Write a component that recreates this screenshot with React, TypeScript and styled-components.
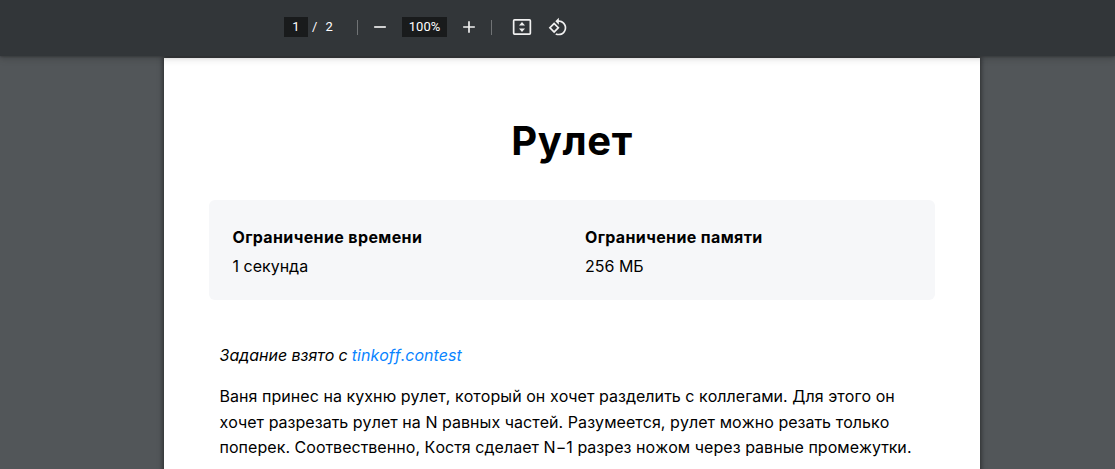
import React from 'react';
import styled, { createGlobalStyle } from 'styled-components';

const GlobalStyle = createGlobalStyle`
  * { box-sizing: border-box; }
  body { margin: 0; background: #525659; overflow: hidden; }
`;

const Viewer = styled.div`
  height: 469px;
  overflow: hidden;
  background: #525659;
  display: flex;
  flex-direction: column;
  font-family: Inter, sans-serif;
  font-kerning: none;
  color: #000;
`;

const Toolbar = styled.header`
  position: relative;
  z-index: 1;
  flex: none;
  height: 56px;
  padding: 0 0 2px 284px;
  display: flex;
  align-items: center;
  background: #323639;
  color: #fff;
  font: 13px/20px Roboto, sans-serif;
  box-shadow: 0 -2px 8px rgba(0, 0, 0, 0.09), 0 4px 8px rgba(0, 0, 0, 0.06),
    0 1px 2px rgba(0, 0, 0, 0.2), 0 2px 6px rgba(0, 0, 0, 0.1);
`;

const Field = styled.span<{ $width: number; $left?: number }>`
  width: ${(p) => p.$width}px;
  height: 20px;
  margin-left: ${(p) => p.$left ?? 0}px;
  text-align: center;
  background: #191b1c;
`;

const Total = styled.span`
  margin-left: 4px;
  width: 45px;
  word-spacing: 5px;
`;

const Divider = styled.i<{ $left?: number }>`
  width: 1px;
  height: 15px;
  margin-left: ${(p) => p.$left ?? 0}px;
  background: #707375;
`;

const Icon = styled.svg<{ $left: number }>`
  width: 20px;
  height: 20px;
  margin-left: ${(p) => p.$left}px;
  fill: #f1f1f1;
`;

const Page = styled.main`
  flex: none;
  width: 816px;
  height: 500px;
  margin: 2px 0 0 164px;
  padding: 58px 45px 0;
  background: #fff;
  box-shadow: 0 0 5px 1px rgba(0, 0, 0, 0.5);
`;

const Title = styled.h1`
  margin: 0;
  font-size: 40px;
  line-height: 49px;
  font-weight: 700;
  letter-spacing: 0.6px;
  text-align: center;
`;

const Limits = styled.section`
  margin-top: 35px;
  height: 100px;
  padding: 23px 23.5px;
  display: grid;
  grid-template-columns: 352.5px 1fr;
  border-radius: 6px;
  background: #f6f7f9;
`;

const Limit = styled.div`
  font-size: 16px;
  line-height: 29px;
`;

const Label = styled.div`
  font-weight: 700;
  letter-spacing: 0.38px;
`;

const Source = styled.p`
  margin: 42px 0 0 10.5px;
  font-size: 16px;
  line-height: 26px;
  font-style: italic;
  word-spacing: -0.3px;
`;

const Link = styled.a`
  color: #0a84ff;
`;

const Statement = styled.p`
  margin: 16px 0 0 10.5px;
  font-size: 16px;
  line-height: 25.6px;
  letter-spacing: 0.05px;
`;

const Line = styled.span`
  display: block;
  white-space: nowrap;
`;

export default function App() {
  return (
    <Viewer>
      <GlobalStyle />
      <Toolbar>
        <Field $width={24}>1</Field>
        <Total>/ 2</Total>
        <Divider />
        <Icon $left={12} viewBox="0 0 24 24"><path d="M19 13H5v-2h14v2z" /></Icon>
        <Field $width={45} $left={12}>100%</Field>
        <Icon $left={12} viewBox="0 0 24 24"><path d="M19 13h-6v6h-2v-6H5v-2h6V5h2v6h6v2z" /></Icon>
        <Divider $left={12} />
        <Icon $left={20} viewBox="0 0 20 20">
          <path fillRule="evenodd" d="M2.5 2h15A1.7 1.7 0 0 1 19.2 3.7v12.600A1.7 1.7 0 0 1 17.500 18H2.500A1.7 1.7 0 0 1 .8 16.300V3.700A1.7 1.7 0 0 1 2.500 2zM2.500 3.700v12.600h15V3.700zM10 4.900l3 3.500H7zM7 11.600h6L10 15.100z" />
        </Icon>
        <Icon $left={16} viewBox="0 0 24 24">
          <path d="M7.34 6.41L.86 12.9l6.49 6.48 6.49-6.48-6.5-6.49zM3.69 12.9l3.66-3.66L11 12.9l-3.66 3.66-3.65-3.66zm15.67-6.26C17.61 4.88 15.3 4 13 4V.76L8.76 5 13 9.24V6c1.79 0 3.58.68 4.95 2.05 2.73 2.73 2.73 7.17 0 9.9C16.58 19.32 14.79 20 13 20c-.97 0-1.94-.21-2.84-.61l-1.49 1.49C10.02 21.62 11.51 22 13 22c2.3 0 4.61-.88 6.36-2.64 3.52-3.51 3.52-9.21 0-12.72z" />
        </Icon>
      </Toolbar>
      <Page>
        <Title>Рулет</Title>
        <Limits>
          <Limit><Label>Ограничение времени</Label>1 секунда</Limit>
          <Limit><Label>Ограничение памяти</Label>256 МБ</Limit>
        </Limits>
        <Source>Задание взято с <Link>tinkoff.contest</Link></Source>
        <Statement>
          <Line>Ваня принес на кухню рулет, который он хочет разделить с коллегами. Для этого он</Line>
          <Line>хочет разрезать рулет на N равных частей. Разумеется, рулет можно резать только</Line>
          <Line>поперек. Соотвественно, Костя сделает N−1 разрез ножом через равные промежутки.</Line>
        </Statement>
      </Page>
    </Viewer>
  );
}
